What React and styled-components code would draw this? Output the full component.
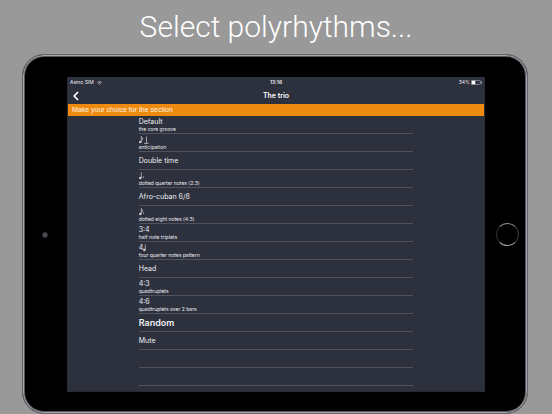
import React from "react";
import styled, { createGlobalStyle } from "styled-components";

const rhythms = [
  { name: "Default", detail: "the core groove" },
  { icon: "anticipation", detail: "anticipation" },
  { name: "Double time" },
  { icon: "dottedQuarter", detail: "dotted quarter notes (2:3)" },
  { name: "Afro-cuban 6/8" },
  { icon: "dottedEighth", detail: "dotted eight notes (4:3)" },
  { name: "3:4", detail: "half note triplets" },
  { name: "4", icon: "quarter", detail: "four quarter notes pattern" },
  { name: "Head" },
  { name: "4:3", detail: "quadtruplets" },
  { name: "4:6", detail: "quadtruplets over 2 bars" },
  { name: "Random", strong: true },
  { name: "Mute" },
  {},
  {},
];

function NoteIcon({ kind }) {
  const eighth = kind === "anticipation" || kind === "dottedEighth";
  const dotted = kind === "dottedQuarter" || kind === "dottedEighth";
  return (
    <Note viewBox="0 0 12 8" role="img" aria-label={kind}>
      <ellipse cx="1.3" cy="6" rx="1" ry="0.8" />
      <path d="M2.3 0.4V6" />
      {eighth && <path d="M2.3 0.6C2.6 2 4.2 2 3.5 4" />}
      {dotted && <circle cx="4.5" cy="5" r="0.6" stroke="none" />}
      {kind === "anticipation" && <path d="M7.5 0.6V7M5 7.4H9.6" />}
    </Note>
  );
}

export default function App() {
  return (
    <>
      <GlobalStyle />
      <Headline>Select polyrhythms...</Headline>
      <Tablet>
        <Camera />
        <Screen>
          <StatusBar>
            <Carrier>
              Asino SIM
              <Wifi viewBox="0 0 10 8" role="img" aria-label="Wi-Fi">
                <path d="M0.8 3C3.2 0.7 6.8 0.7 9.2 3M2.6 4.8C4 3.6 6 3.6 7.4 4.8" />
                <circle cx="5" cy="6.5" r="0.9" />
              </Wifi>
            </Carrier>
            <Time>13:16</Time>
            <Power>
              34%
              <Battery viewBox="0 0 22 10" role="img" aria-label="Battery">
                <rect x="0.7" y="0.7" width="18" height="8.6" rx="1.6" />
                <path d="M1.5 1.5H8.6V8.5H1.5ZM20 3.5H21.4V6.5H20Z" />
              </Battery>
            </Power>
          </StatusBar>
          <NavBar>
            <BackButton aria-label="Back">
              <Chevron viewBox="0 0 6 10">
                <path d="M5 1L1.2 5L5 9" />
              </Chevron>
            </BackButton>
            <NavTitle>The trio</NavTitle>
          </NavBar>
          <Banner>Make your choice for the section</Banner>
          <List>
            {rhythms.map((item, i) => (
              <Row key={i}>
                <Name $strong={item.strong}>
                  {item.name}
                  {item.icon && <NoteIcon kind={item.icon} />}
                </Name>
                {item.detail && <Detail>{item.detail}</Detail>}
              </Row>
            ))}
          </List>
        </Screen>
        <HomeButton aria-label="Home" />
      </Tablet>
    </>
  );
}

const GlobalStyle = createGlobalStyle`
  * {
    box-sizing: border-box;
  }
  body {
    margin: 0;
    background-color: #999999;
    font-family: Inter, "Liberation Sans", sans-serif;
    color: #eeeff3;
  }
`;

const Headline = styled.h1`
  margin: 0;
  height: 54px;
  font-family: Roboto, "Liberation Sans", sans-serif;
  font-size: 30px;
  font-weight: 300;
  line-height: 54px;
  text-align: center;
  color: white;
`;

const Tablet = styled.main`
  display: grid;
  grid-template-columns: 44px 1fr 42px;
  align-items: center;
  justify-items: center;
  margin: 0 24px 0 22px;
  padding: 22px 0 21px;
  border: 1px solid #64646a;
  border-radius: 22px;
  background-color: black;
  box-shadow: inset 0 0 0 1px #a6a6ac, inset 0 0 0 2px #55555b;
`;

const Camera = styled.div`
  width: 6px;
  height: 6px;
  border: 1px solid #34363d;
  border-radius: 50%;
  background-color: #4a4d58;
`;

const Screen = styled.section`
  width: 100%;
  padding-bottom: 5px;
  border: 1px solid #292b33;
  border-top: 0;
  background-color: #2d303d;
`;

const StatusBar = styled.div`
  display: grid;
  grid-template-columns: 1fr auto 1fr;
  align-items: center;
  height: 11px;
  padding: 0 2px;
  font-size: 5px;
  line-height: 11px;
`;

const Carrier = styled.div`
  display: flex;
  align-items: center;
  gap: 3px;
`;

const Wifi = styled.svg`
  width: 5px;
  height: 4px;
  fill: #e8e9ee;
  path {
    fill: none;
    stroke: #e8e9ee;
    stroke-width: 1.4;
  }
`;

const Time = styled.div`
  font-weight: 600;
`;

const Power = styled.div`
  display: flex;
  align-items: center;
  justify-content: flex-end;
  gap: 1px;
`;

const Battery = styled.svg`
  width: 11px;
  height: 5px;
  fill: white;
  rect {
    fill: none;
    stroke: #b9bbc4;
    stroke-width: 1.2;
  }
`;

const NavBar = styled.header`
  display: grid;
  grid-template-columns: 16px 1fr 16px;
  align-items: center;
  height: 16px;
`;

const BackButton = styled.button`
  display: flex;
  align-items: center;
  justify-content: center;
  width: 16px;
  height: 16px;
  padding: 0;
  border: 0;
  background: none;
  cursor: pointer;
`;

const Chevron = styled.svg`
  width: 6px;
  height: 10px;
  fill: none;
  stroke: white;
  stroke-width: 1.7;
`;

const NavTitle = styled.h2`
  margin: 0;
  font-size: 7px;
  font-weight: 600;
  line-height: 16px;
  text-align: center;
  color: white;
`;

const Banner = styled.div`
  padding: 0 4px;
  background-color: #ee8a10;
  font-family: "Liberation Sans", sans-serif;
  font-size: 7px;
  line-height: 12px;
  color: #fff4e4;
`;

const List = styled.ul`
  width: 66%;
  margin: 0 auto;
  padding: 0;
  list-style: none;
`;

const Row = styled.li`
  display: flex;
  flex-direction: column;
  justify-content: center;
  height: 18px;
  border-bottom: 1px solid #50535e;
`;

const Name = styled.div`
  display: flex;
  align-items: center;
  height: 8px;
  font-size: ${(props) => (props.$strong ? "9px" : "7px")};
  font-weight: ${(props) => (props.$strong ? 600 : 400)};
  line-height: 8px;
`;

const Detail = styled.div`
  font-size: 5px;
  line-height: 6px;
`;

const Note = styled.svg`
  width: 12px;
  height: 8px;
  fill: #eeeff3;
  stroke: #eeeff3;
  stroke-width: 0.6;
  path {
    fill: none;
  }
`;

const HomeButton = styled.button`
  justify-self: end;
  width: 23px;
  height: 23px;
  margin-right: 8px;
  padding: 0;
  border: 1px solid #55575a;
  border-color: #8b8d90 #3b3c3e #9b9da0 #2b2c2e;
  border-radius: 50%;
  background-color: black;
  cursor: pointer;
`;
